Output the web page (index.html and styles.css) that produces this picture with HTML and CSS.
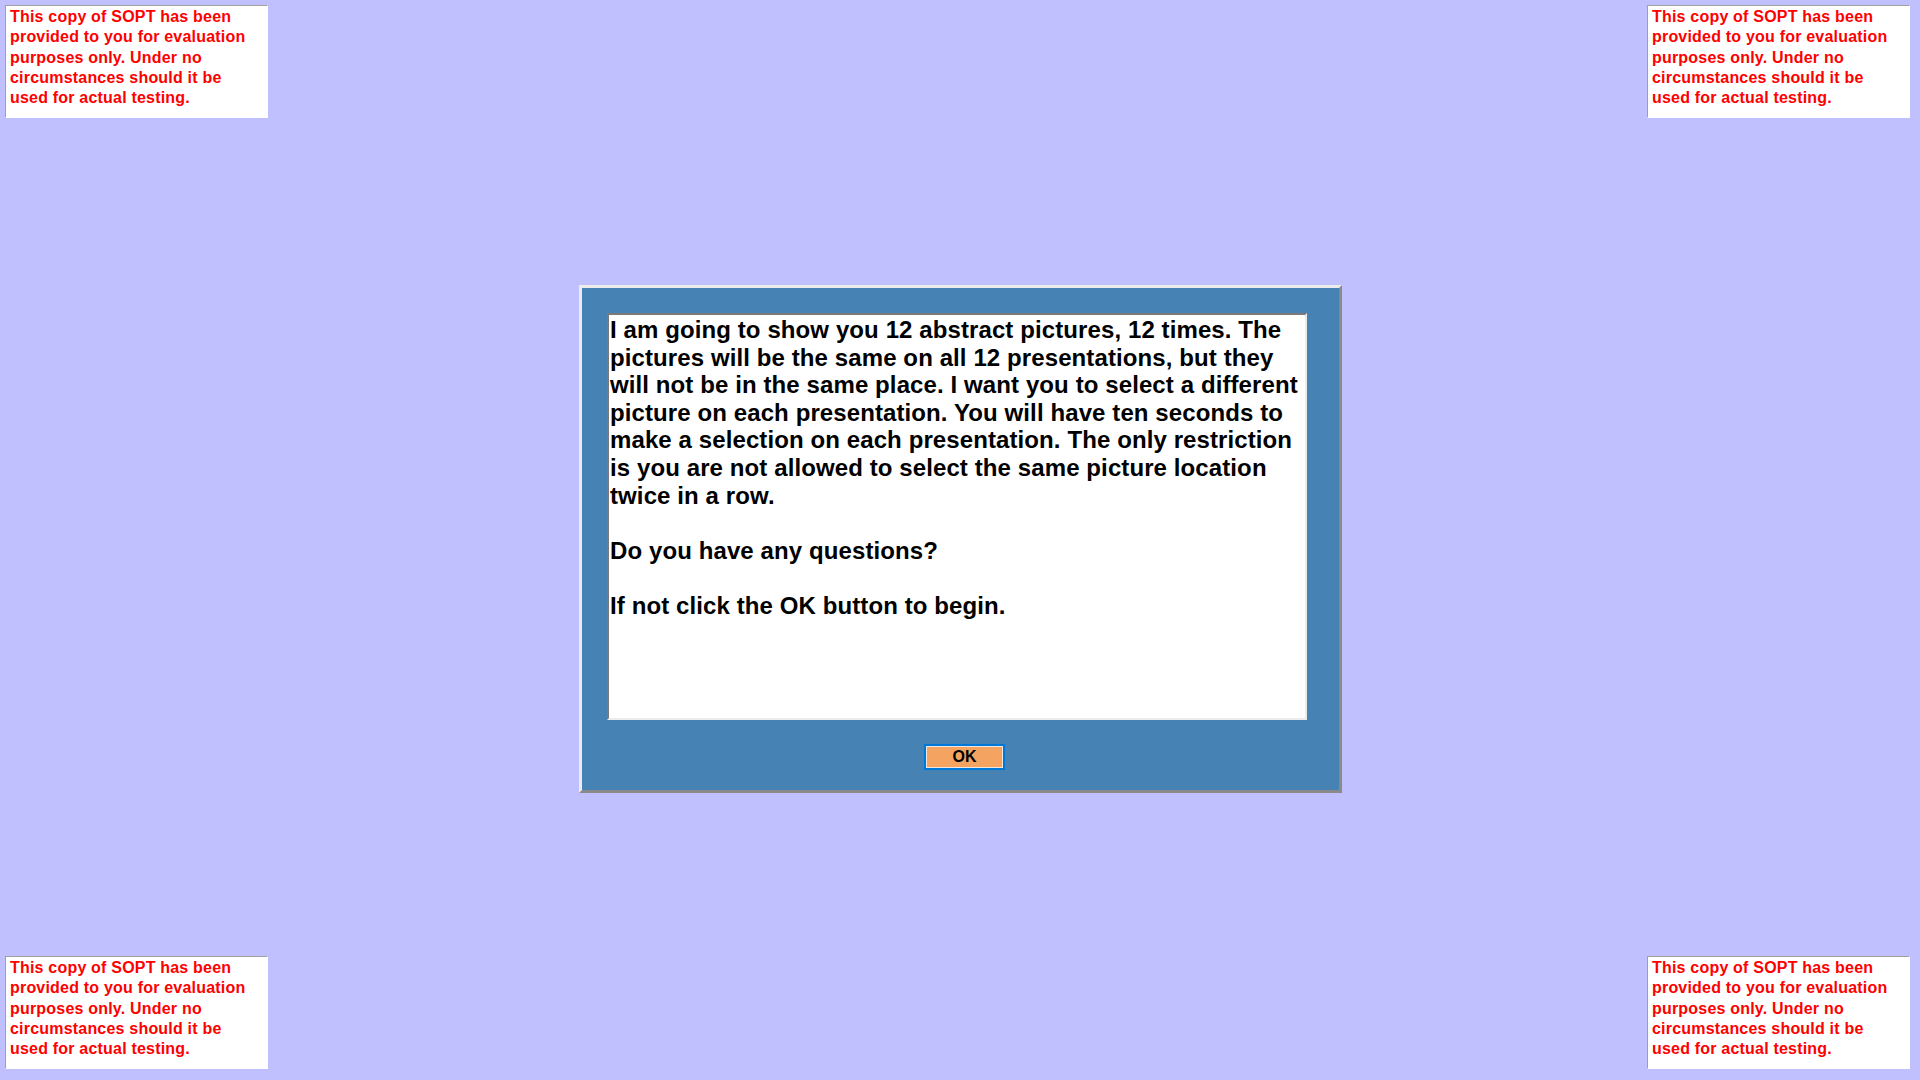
FILE: index.html
```html
<!DOCTYPE html>
<html>
<head>
<meta charset="utf-8">
<title>SOPT</title>
<link rel="stylesheet" href="styles.css">
</head>
<body>
<div class="page">
  <div class="corner-row top">
    <div class="notice">This copy of SOPT has been<br>provided to you for evaluation<br>purposes only. Under no<br>circumstances should it be<br>used for actual testing.</div>
    <div class="notice">This copy of SOPT has been<br>provided to you for evaluation<br>purposes only. Under no<br>circumstances should it be<br>used for actual testing.</div>
  </div>

  <div class="dialog">
    <div class="textbox">I am going to show you 12 abstract pictures, 12 times. The<br>pictures will be the same on all 12 presentations, but they<br>will not be in the same place. I want you to select a different<br>picture on each presentation. You will have ten seconds to<br>make a selection on each presentation. The only restriction<br>is you are not allowed to select the same picture location<br>twice in a row.<br><br>Do you have any questions?<br><br>If not click the OK button to begin.</div>
    <div class="button-row">
      <button class="ok">OK</button>
    </div>
  </div>

  <div class="corner-row bottom">
    <div class="notice">This copy of SOPT has been<br>provided to you for evaluation<br>purposes only. Under no<br>circumstances should it be<br>used for actual testing.</div>
    <div class="notice">This copy of SOPT has been<br>provided to you for evaluation<br>purposes only. Under no<br>circumstances should it be<br>used for actual testing.</div>
  </div>
</div>
</body>
</html>
```
FILE: styles.css
```css
html, body {
  margin: 0;
  padding: 0;
}
body {
  background: #c0c0ff;
  font-family: "Liberation Sans", Arial, sans-serif;
}
.page {
  width: 1920px;
  height: 1080px;
  display: flex;
  flex-direction: column;
  box-sizing: border-box;
}
.corner-row {
  display: flex;
  justify-content: space-between;
  padding-left: 5px;
  padding-right: 10px;
}
.corner-row.top {
  padding-top: 5px;
}
.corner-row.bottom {
  margin-top: auto;
  padding-bottom: 11px;
}
.notice {
  width: 263px;
  height: 113px;
  box-sizing: border-box;
  background: #ffffff;
  border-style: solid;
  border-width: 1px;
  border-color: #a0a0a0 #ffffff #ffffff #a0a0a0;
  padding: 1px 0 0 4px;
  color: #ff0000;
  font-weight: bold;
  font-size: 16px;
  line-height: 20.3px;
  letter-spacing: 0.2px;
  white-space: nowrap;
}
.dialog {
  align-self: center;
  margin-top: 167px;
  margin-left: 1px;
  width: 763px;
  height: 508px;
  box-sizing: border-box;
  background: #4682b4;
  border-style: solid;
  border-width: 3px;
  border-color: #ececec #8a8a8a #8a8a8a #ececec;
  padding: 25px 0 0 25px;
  display: flex;
  flex-direction: column;
}
.textbox {
  width: 700px;
  height: 407px;
  box-sizing: border-box;
  background: #ffffff;
  border-style: solid;
  border-width: 2px;
  border-color: #7a7a7a #ececec #ececec #7a7a7a;
  padding: 1px 0 0 1px;
  color: #000000;
  font-weight: bold;
  font-size: 24px;
  line-height: 27.6px;
  letter-spacing: 0.1px;
  white-space: nowrap;
  overflow: hidden;
}
.button-row {
  display: flex;
  padding-top: 24px;
  padding-left: 317px;
}
.ok {
  width: 81px;
  height: 26px;
  box-sizing: border-box;
  margin: 0;
  padding: 0;
  background: #f4a460;
  border: 2px solid #0078d7;
  box-shadow: inset 0 0 0 1px #f0e6dc;
  color: #000000;
  font-family: "Liberation Sans", Arial, sans-serif;
  font-weight: bold;
  font-size: 16px;
  line-height: 20px;
  cursor: pointer;
}
```
